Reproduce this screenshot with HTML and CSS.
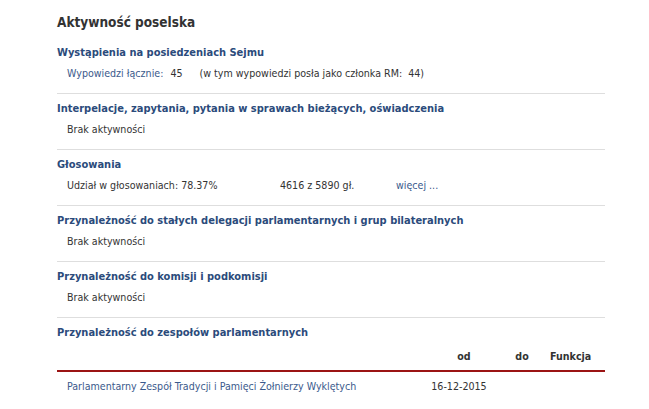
FILE: index.html
```html
<!DOCTYPE html>
<html lang="pl">
<head>
    <meta charset="utf-8">
    <title>Aktywność poselska</title>
    <link rel="stylesheet" href="styles.css">
</head>
<body>
    <div class="activity">
        <h2>Aktywność poselska</h2>

        <div class="section">
            <h3>Wystąpienia na posiedzeniach Sejmu</h3>
            <div class="row">
                <a href="#" class="link">Wypowiedzi łącznie:</a>
                <span class="num">45</span>
                <span class="note">(w tym wypowiedzi posła jako członka RM:&nbsp; 44)</span>
            </div>
        </div>

        <div class="section">
            <h3>Interpelacje, zapytania, pytania w sprawach bieżących, oświadczenia</h3>
            <div class="row">Brak aktywności</div>
        </div>

        <div class="section">
            <h3>Głosowania</h3>
            <div class="row votes">
                <span class="share">Udział w głosowaniach: 78.37%</span>
                <span class="count">4616 z 5890 gł.</span>
                <a href="#" class="link">więcej ...</a>
            </div>
        </div>

        <div class="section">
            <h3>Przynależność do stałych delegacji parlamentarnych i grup bilateralnych</h3>
            <div class="row">Brak aktywności</div>
        </div>

        <div class="section">
            <h3>Przynależność do komisji i podkomisji</h3>
            <div class="row">Brak aktywności</div>
        </div>

        <div class="section last">
            <h3>Przynależność do zespołów parlamentarnych</h3>
            <table class="teams">
                <thead>
                    <tr>
                        <th class="name"></th>
                        <th class="from">od</th>
                        <th class="to">do</th>
                        <th class="role">Funkcja</th>
                    </tr>
                </thead>
                <tbody>
                    <tr>
                        <td class="name"><a href="#" class="link">Parlamentarny Zespół Tradycji i Pamięci Żołnierzy Wyklętych</a></td>
                        <td class="from">16-12-2015</td>
                        <td class="to"></td>
                        <td class="role"></td>
                    </tr>
                </tbody>
            </table>
        </div>
    </div>
</body>
</html>
```

FILE: styles.css
```css
body {
    margin: 0;
    background: #fff;
    color: #333;
    font-family: "DejaVu Sans Condensed", "DejaVu Sans", Verdana, sans-serif;
    font-size: 10.6px;
}

.activity {
    width: 548px;
    margin-left: 57px;
    padding-top: 12px;
}

h2 {
    margin: 0;
    font-size: 13.5px;
    line-height: 20px;
    font-weight: bold;
    color: #333;
}

.section {
    padding: 13px 0 12px;
    border-bottom: 1px solid #dedede;
}

.section + .section {
    padding-top: 7px;
}

.section.last {
    border-bottom: none;
}

h3 {
    margin: 0;
    font-size: 11px;
    line-height: 16px;
    font-weight: bold;
    color: #2b4b7b;
}

.row {
    margin-top: 4px;
    padding-left: 10px;
    line-height: 16px;
}

a.link {
    color: #3b5a8c;
    text-decoration: none;
}

.num {
    margin-left: 4px;
}

.note {
    margin-left: 14px;
}

.votes {
    display: flex;
}

.votes .share {
    width: 213px;
}

.votes .count {
    width: 116px;
}

.teams {
    width: 100%;
    margin-top: 7px;
    border-collapse: collapse;
    table-layout: fixed;
}

.teams th {
    font-weight: bold;
    color: #333;
    line-height: 16px;
    padding: 0 0 6px;
    border-bottom: 2px solid #9b1414;
}

.teams td {
    line-height: 16px;
    padding: 6px 0 0;
}

.teams .name {
    width: 352px;
    padding-left: 10px;
    text-align: left;
}

.teams .from {
    width: 80px;
    text-align: center;
}

.teams th.from {
    padding-left: 10px;
    width: 70px;
}

.teams .to {
    width: 46px;
    text-align: center;
}

.teams .role {
    text-align: left;
}

.teams th.role {
    padding-left: 5px;
}
```
